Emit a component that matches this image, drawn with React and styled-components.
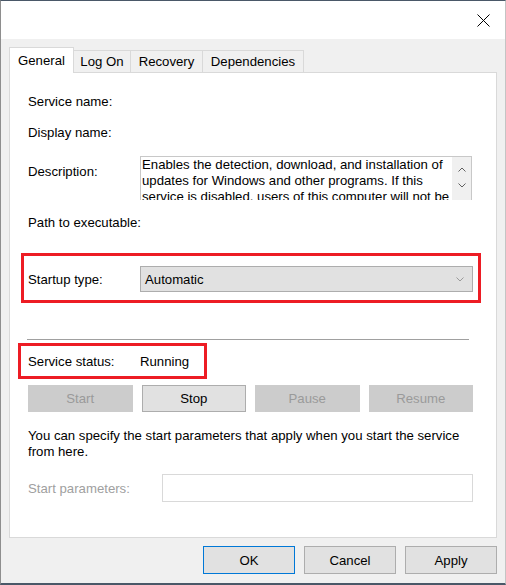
import React from 'react';
import styled, { createGlobalStyle } from 'styled-components';

const GlobalStyle = createGlobalStyle`
  body {
    margin: 0;
    font-family: "Liberation Sans", Arial, sans-serif;
    font-size: 13.2px;
    color: #000;
  }
`;

const Window = styled.div`
  width: 506px;
  height: 585px;
  box-sizing: border-box;
  border-top: 1px solid #4a5868;
  border-left: 1px solid #8e8e8e;
  border-right: 1px solid #c4c4c4;
  border-bottom: 2px solid #4a5868;
  background: #f0f0f0;
  display: flex;
  flex-direction: column;
`;

const TitleBar = styled.div`
  height: 38px;
  background: #fff;
  display: flex;
  align-items: center;
  justify-content: flex-end;
  padding-right: 15px;
`;

const Body = styled.div`
  flex: 1;
  display: flex;
  flex-direction: column;
  padding: 8px 8px 0;
`;

const TabRow = styled.div`
  display: flex;
  align-items: flex-end;
  height: 25px;
`;

const Tab = styled.div`
  width: ${props => props.width}px;
  height: ${props => (props.active ? 26 : 22)}px;
  box-sizing: border-box;
  border: 1px solid #d9d9d9;
  border-bottom: none;
  background: ${props => (props.active ? '#fff' : '#f0f0f0')};
  margin-bottom: ${props => (props.active ? -1 : 0)}px;
  margin-left: ${props => (props.first ? 0 : -1)}px;
  position: relative;
  z-index: ${props => (props.active ? 1 : 0)};
  display: flex;
  align-items: center;
  justify-content: center;
  padding-bottom: ${props => (props.active ? 1 : 0)}px;
`;

const Panel = styled.div`
  height: 466px;
  box-sizing: border-box;
  border: 1px solid #d9d9d9;
  background: #fff;
  padding: 0 18px;
  display: flex;
  flex-direction: column;
`;

const Field = styled.div`
  display: flex;
  align-items: ${props => props.align || 'center'};
  line-height: 17px;
  margin-top: ${props => props.top}px;
`;

const Label = styled.div`
  width: ${props => props.width || 112}px;
  flex-shrink: 0;
  white-space: nowrap;
  color: ${props => (props.disabled ? '#a0a0a0' : '#000')};
  padding-top: ${props => props.padTop || 0}px;
`;

const DescBox = styled.div`
  width: 332px;
  height: 44px;
  box-sizing: border-box;
  border: 1px solid #c8c8c8;
  border-bottom: none;
  display: flex;
  overflow: hidden;
`;

const DescText = styled.div`
  flex: 1;
  padding: 0 0 0 1px;
  line-height: 16px;
  white-space: nowrap;
  overflow: hidden;
`;

const ScrollBar = styled.div`
  width: 19px;
  background: #f0f0f0;
  display: flex;
  flex-direction: column;
  align-items: center;
  padding-top: 10px;
  gap: 11px;
`;

const Highlight = styled.div`
  display: flex;
  align-items: center;
  box-sizing: border-box;
  border: 3px solid #ed1c24;
  width: ${props => props.width}px;
  margin-left: ${props => props.left}px;
  margin-top: ${props => props.top}px;
  padding: ${props => props.pad};
`;

const Combo = styled.div`
  width: 333px;
  height: 26px;
  box-sizing: border-box;
  background: #e1e1e1;
  border: 1px solid #adadad;
  display: flex;
  align-items: center;
  justify-content: space-between;
  padding: 0 8px 0 4px;
`;

const Separator = styled.div`
  height: 1px;
  width: 442px;
  margin: 36px 0 0 -1px;
  background: #a0a0a0;
`;

const StatusLine = styled.div`
  display: flex;
  height: 30px;
  align-items: center;
`;

const ButtonRow = styled.div`
  width: 445px;
  display: grid;
  grid-template-columns: repeat(4, 1fr);
  gap: 9px;
  margin-top: 6px;
`;

const Button = styled.div`
  height: 27px;
  box-sizing: border-box;
  display: flex;
  align-items: center;
  justify-content: center;
  background: ${props => (props.disabled ? '#cccccc' : '#e1e1e1')};
  border: 1px solid ${props => (props.disabled ? '#cccccc' : '#adadad')};
  color: ${props => (props.disabled ? '#9a9a9a' : '#000')};
`;

const Info = styled.div`
  margin-top: 16px;
  line-height: 16px;
`;

const ParamInput = styled.div`
  width: 311px;
  height: 28px;
  box-sizing: border-box;
  border: 1px solid #d9d9d9;
  background: #fff;
`;

const Footer = styled.div`
  display: flex;
  justify-content: flex-end;
  gap: 9px;
  margin-top: 8px;
`;

const DialogButton = styled.div`
  width: 92px;
  height: 28px;
  box-sizing: border-box;
  display: flex;
  align-items: center;
  justify-content: center;
  background: #e1e1e1;
  border: 1px solid ${props => (props.primary ? '#0078d7' : '#adadad')};
`;

const CloseIcon = () => (
  <svg width="13" height="13" viewBox="0 0 13 13">
    <path d="M0.5 0.5 L12.5 12.5 M12.5 0.5 L0.5 12.5" stroke="#000" strokeWidth="1" />
  </svg>
);

const Chevron = ({ up, color = '#606060' }) => (
  <svg width="8" height="5" viewBox="0 0 8 5">
    <path
      d={up ? 'M0.5 4.5 L4 1 L7.5 4.5' : 'M0.5 0.5 L4 4 L7.5 0.5'}
      fill="none"
      stroke={color}
      strokeWidth="1"
    />
  </svg>
);

const tabs = [
  { name: 'General', width: 65 },
  { name: 'Log On', width: 58 },
  { name: 'Recovery', width: 73 },
  { name: 'Dependencies', width: 102 },
];

const description = [
  'Enables the detection, download, and installation of',
  'updates for Windows and other programs. If this',
  'service is disabled, users of this computer will not be',
];

export default function App() {
  return (
    <>
      <GlobalStyle />
      <Window>
        <TitleBar>
          <CloseIcon />
        </TitleBar>
        <Body>
          <TabRow>
            {tabs.map((t, i) => (
              <Tab key={t.name} width={t.width} active={i === 0} first={i === 0}>
                {t.name}
              </Tab>
            ))}
          </TabRow>
          <Panel>
            <Field top={20}>
              <Label>Service name:</Label>
            </Field>
            <Field top={14}>
              <Label>Display name:</Label>
            </Field>
            <Field top={15} align="flex-start">
              <Label padTop={7}>Description:</Label>
              <DescBox>
                <DescText>
                  {description.map(line => (
                    <div key={line}>{line}</div>
                  ))}
                </DescText>
                <ScrollBar>
                  <Chevron up />
                  <Chevron />
                </ScrollBar>
              </DescBox>
            </Field>
            <Field top={14}>
              <Label>Path to executable:</Label>
            </Field>
            <Highlight width={460} left={-7} top={22} pad="10px 5px 8px 4px">
              <Label>Startup type:</Label>
              <Combo>
                <span>Automatic</span>
                <Chevron color="#9a9a9a" />
              </Combo>
            </Highlight>
            <Separator />
            <Highlight width={189} left={-10} top={3} pad="0 0 0 7px">
              <StatusLine>
                <Label>Service status:</Label>
                <span>Running</span>
              </StatusLine>
            </Highlight>
            <ButtonRow>
              <Button disabled>Start</Button>
              <Button>Stop</Button>
              <Button disabled>Pause</Button>
              <Button disabled>Resume</Button>
            </ButtonRow>
            <Info>
              You can specify the start parameters that apply when you start the service
              <br />
              from here.
            </Info>
            <Field top={14}>
              <Label width={134} disabled>Start parameters:</Label>
              <ParamInput />
            </Field>
          </Panel>
          <Footer>
            <DialogButton primary>OK</DialogButton>
            <DialogButton>Cancel</DialogButton>
            <DialogButton>Apply</DialogButton>
          </Footer>
        </Body>
      </Window>
    </>
  );
}
